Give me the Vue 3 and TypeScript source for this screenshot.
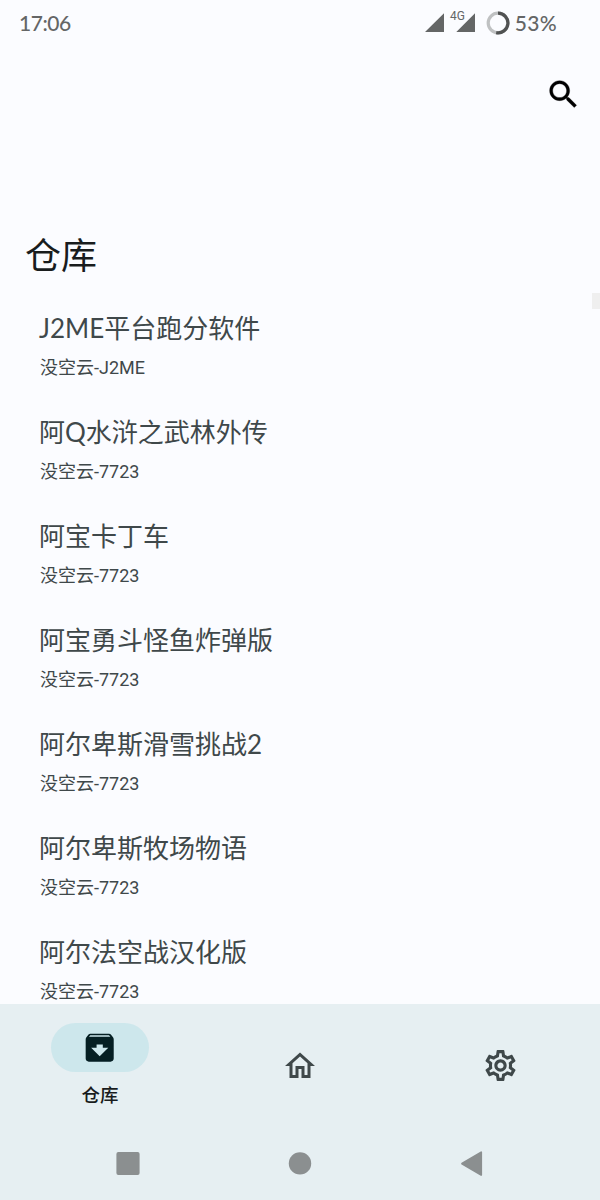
<script setup lang="ts">
interface Entry {
  title: string
  source: string
}

const entries: Entry[] = [
  { title: 'J2ME平台跑分软件', source: '没空云-J2ME' },
  { title: '阿Q水浒之武林外传', source: '没空云-7723' },
  { title: '阿宝卡丁车', source: '没空云-7723' },
  { title: '阿宝勇斗怪鱼炸弹版', source: '没空云-7723' },
  { title: '阿尔卑斯滑雪挑战2', source: '没空云-7723' },
  { title: '阿尔卑斯牧场物语', source: '没空云-7723' },
  { title: '阿尔法空战汉化版', source: '没空云-7723' },
]
</script>

<template>
  <div class="screen">
    <header class="status">
      <span class="clock">17:06</span>
      <div class="indicators">
        <svg class="signals" width="52" height="32" viewBox="0 -3 52 32">
          <path d="M0 22H19V3.2Z M31.3 22H50V3.2Z" fill="#646666" />
          <text x="25" y="10.2" class="network">4G</text>
        </svg>
        <svg class="ring" width="24" height="24" viewBox="0 0 24 24" fill="none" stroke-width="3.2">
          <circle cx="12" cy="12" r="9.8" stroke="#bfc1c2" />
          <path d="M12 2.2A9.8 9.8 0 1 1 10.2 21.6" stroke="#505252" />
        </svg>
        <span class="percent">53%</span>
      </div>
    </header>

    <div class="toolbar">
      <button class="search" aria-label="搜索">
        <svg width="37" height="37" viewBox="0 0 24 24" stroke="#000" stroke-width=".2">
          <path d="M15.5 14h-.79l-.28-.27C15.41 12.59 16 11.11 16 9.5 16 5.91 13.09 3 9.5 3S3 5.91 3 9.5 5.91 16 9.5 16c1.61 0 3.09-.59 4.23-1.57l.27.28v.79l5 4.99L20.49 19l-4.99-5zm-6 0C7.01 14 5 11.99 5 9.5S7.01 5 9.5 5 14 7.01 14 9.5 11.99 14 9.5 14z" />
        </svg>
      </button>
    </div>

    <h1 class="heading">仓库</h1>

    <main class="content">
      <ul class="list">
        <li v-for="entry in entries" :key="entry.title" class="row">
          <div class="title">{{ entry.title }}</div>
          <div class="source">{{ entry.source }}</div>
        </li>
      </ul>
      <div class="scrollbar"></div>
    </main>

    <footer class="bottom">
      <nav class="tabs">
        <div class="tab active">
          <div class="pill">
            <svg width="37.4" height="37.4" viewBox="0 0 24 24" fill="#051f23">
              <path d="M20.54 5.23l-1.39-1.68C18.88 3.21 18.47 3 18 3H6c-.47 0-.88.21-1.16.55L3.46 5.23C3.17 5.57 3 6.02 3 6.5V19c0 1.1.9 2 2 2h14c1.1 0 2-.9 2-2V6.5c0-.48-.17-.93-.46-1.27zM12 17.5L6.5 12H10v-2h4v2h3.5L12 17.5zM5.12 5l.81-1h12l.94 1H5.12z" />
            </svg>
          </div>
          <span class="label">仓库</span>
        </div>
        <div class="tab">
          <svg width="36" height="36" viewBox="0 0 24 24" fill="#3f484a">
            <path d="M12 5.69l5 4.5V18h-2v-6H9v6H7v-7.81l5-4.5M12 3L2 12h3v8h6v-6h2v6h6v-8h3L12 3z" />
          </svg>
        </div>
        <div class="tab">
          <svg width="37" height="37" viewBox="0 0 24 24" fill="#3f484a">
            <path d="M19.43 12.98c.04-.32.07-.64.07-.98 0-.34-.03-.66-.07-.98l2.11-1.65c.19-.15.24-.42.12-.64l-2-3.46c-.09-.16-.26-.25-.44-.25-.06 0-.12.01-.17.03l-2.49 1c-.52-.4-1.08-.73-1.69-.98l-.38-2.65C14.46 2.18 14.25 2 14 2h-4c-.25 0-.46.18-.49.42l-.38 2.65c-.61.25-1.17.59-1.69.98l-2.49-1c-.06-.02-.12-.03-.18-.03-.17 0-.34.09-.43.25l-2 3.46c-.13.22-.07.49.12.64l2.11 1.65c-.04.32-.07.65-.07.98 0 .33.03.66.07.98l-2.11 1.65c-.19.15-.24.42-.12.64l2 3.46c.09.16.26.25.44.25.06 0 .12-.01.17-.03l2.49-1c.52.4 1.08.73 1.69.98l.38 2.65c.03.24.24.42.49.42h4c.25 0 .46-.18.49-.42l.38-2.65c.61-.25 1.17-.59 1.69-.98l2.49 1c.06.02.12.03.18.03.17 0 .34-.09.43-.25l2-3.46c.12-.22.07-.49-.12-.64l-2.11-1.65zm-1.98-1.71c.04.31.05.52.05.73 0 .21-.02.43-.05.73l-.14 1.13.89.7 1.08.84-.7 1.21-1.27-.51-1.04-.42-.9.68c-.43.32-.84.56-1.25.73l-1.06.43-.16 1.13-.2 1.35h-1.4l-.19-1.35-.16-1.13-1.06-.43c-.43-.18-.83-.41-1.23-.71l-.91-.7-1.06.43-1.27.51-.7-1.21 1.08-.84.89-.7-.14-1.13c-.03-.31-.05-.54-.05-.74s.02-.43.05-.73l.14-1.13-.89-.7-1.08-.84.7-1.21 1.27.51 1.04.42.9-.68c.43-.32.84-.56 1.25-.73l1.06-.43.16-1.13.2-1.35h1.39l.19 1.35.16 1.13 1.06.43c.43.18.83.41 1.23.71l.91.7 1.06-.43 1.27-.51.7 1.21-1.07.85-.89.7.14 1.13zM12 8c-2.21 0-4 1.79-4 4s1.79 4 4 4 4-1.79 4-4-1.79-4-4-4zm0 6c-1.1 0-2-.9-2-2s.9-2 2-2 2 .9 2 2-.9 2-2 2z" />
          </svg>
        </div>
      </nav>
      <div class="system">
        <svg width="24" height="26" viewBox="0 0 24 26"><rect x=".4" y="1" width="23.2" height="23" rx="2" /></svg>
        <svg width="24" height="26" viewBox="0 0 24 26"><circle cx="12" cy="12.4" r="11.2" /></svg>
        <svg width="24" height="26" viewBox="0 0 24 26"><path d="M2 12.6L21.2 1.3V23.9Z" stroke-width="1.8" stroke-linejoin="round" /></svg>
      </div>
    </footer>
  </div>
</template>

<style>
body {
  margin: 0;
  background: #fbfcff;
}
</style>

<style scoped>
.screen {
  width: 600px;
  height: 1200px;
  display: flex;
  flex-direction: column;
  overflow: hidden;
  background: #fbfcff;
  font-family: 'Noto Sans CJK SC', sans-serif;
}
svg {
  display: block;
  flex: none;
}
.status {
  box-sizing: border-box;
  height: 46px;
  flex: none;
  display: flex;
  align-items: center;
  justify-content: space-between;
  padding: 0 43px 0 19px;
  color: #646666;
  font-family: Lato, 'Noto Sans', sans-serif;
  font-size: 21px;
  font-weight: 500;
  line-height: 46px;
}
.clock {
  letter-spacing: -0.45px;
}
.indicators {
  display: flex;
  align-items: center;
}
.signals {
  margin: 0 9px 0 0;
}
.network {
  font: 12px Roboto, sans-serif;
  fill: #646666;
}
.ring {
  margin-right: 5px;
}
.percent {
  letter-spacing: 0.3px;
}
.toolbar {
  box-sizing: border-box;
  height: 98px;
  flex: none;
  display: flex;
  justify-content: flex-end;
  padding: 30px 18px 0 0;
}
.search {
  width: 37px;
  height: 37px;
  padding: 0;
  border: 0;
  background: none;
}
.heading {
  margin: 83px 0 1px 25px;
  color: #191c1d;
  font-size: 36px;
  font-weight: 400;
  line-height: 52px;
}
.content {
  flex: 1;
  min-height: 0;
  display: flex;
  justify-content: space-between;
  overflow: hidden;
}
.list {
  margin: 0;
  padding: 29px 0 0 39px;
  list-style: none;
  color: #3f484a;
}
.row {
  height: 104px;
}
.title {
  font-family: Lato, 'Noto Sans CJK SC', sans-serif;
  font-size: 26px;
  line-height: 38px;
}
.source {
  margin: 8px 0 0 1px;
  font-family: Roboto, 'Noto Sans CJK SC', sans-serif;
  font-size: 18px;
  line-height: 26px;
}
.scrollbar {
  width: 8px;
  height: 16px;
  margin-top: 13px;
  background: #efefef;
}
.bottom {
  height: 196px;
  flex: none;
  background: #e6eff2;
}
.tabs {
  height: 123px;
  display: grid;
  grid-template-columns: repeat(3, 1fr);
}
.tab {
  display: flex;
  flex-direction: column;
  align-items: center;
  justify-content: center;
}
.active {
  justify-content: flex-start;
  padding-top: 19px;
}
.pill {
  width: 98px;
  height: 49px;
  display: flex;
  align-items: center;
  justify-content: center;
  border-radius: 25px;
  background: #cde7ec;
}
.label {
  margin-top: 9px;
  color: #191c1d;
  font-size: 18.5px;
  font-weight: 500;
  line-height: 26px;
}
.system {
  display: flex;
  justify-content: space-between;
  padding: 24px 116px 0;
  fill: #8b8f90;
  stroke: #8b8f90;
  stroke-width: 0;
}
</style>
